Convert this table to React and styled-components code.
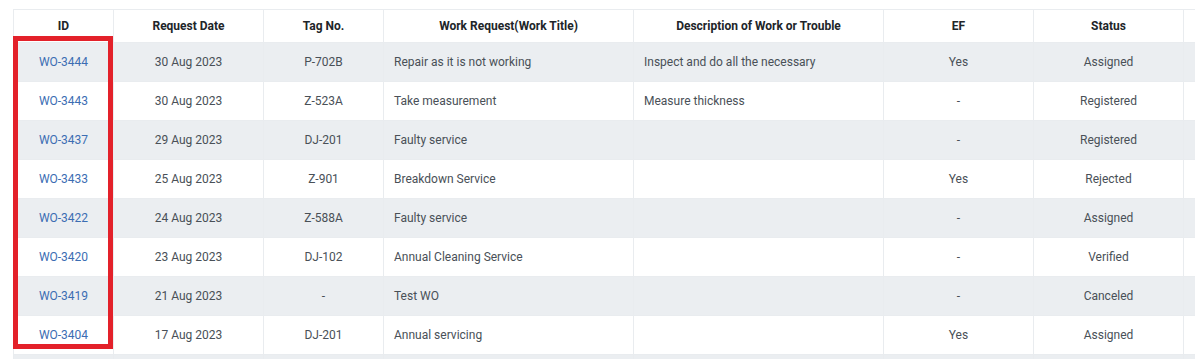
import React from "react";
import styled, { createGlobalStyle } from "styled-components";

const GlobalStyle = createGlobalStyle`
  body {
    margin: 0;
    background: #ffffff;
    font-family: Roboto, "Liberation Sans", Arial, sans-serif;
  }
`;

const columns = [
  { title: "ID", width: 100 },
  { title: "Request Date", width: 150 },
  { title: "Tag No.", width: 120 },
  { title: "Work Request(Work Title)", width: 250 },
  { title: "Description of Work or Trouble", width: 250 },
  { title: "EF", width: 150 },
  { title: "Status", width: 150 },
  { title: "", width: 150 },
];

const rows = [
  ["WO-3444", "30 Aug 2023", "P-702B", "Repair as it is not working", "Inspect and do all the necessary", "Yes", "Assigned"],
  ["WO-3443", "30 Aug 2023", "Z-523A", "Take measurement", "Measure thickness", "-", "Registered"],
  ["WO-3437", "29 Aug 2023", "DJ-201", "Faulty service", "", "-", "Registered"],
  ["WO-3433", "25 Aug 2023", "Z-901", "Breakdown Service", "", "Yes", "Rejected"],
  ["WO-3422", "24 Aug 2023", "Z-588A", "Faulty service", "", "-", "Assigned"],
  ["WO-3420", "23 Aug 2023", "DJ-102", "Annual Cleaning Service", "", "-", "Verified"],
  ["WO-3419", "21 Aug 2023", "-", "Test WO", "", "-", "Canceled"],
  ["WO-3404", "17 Aug 2023", "DJ-201", "Annual servicing", "", "Yes", "Assigned"],
  ["", "", "", "", "", "", ""],
];

const Page = styled.div`
  padding: 9px 0 0 13px;
  height: 359px;
  box-sizing: border-box;
  overflow: hidden;
`;

const TableWrap = styled.div`
  position: relative;
  width: 1320px;
`;

const Table = styled.table`
  border-collapse: collapse;
  table-layout: fixed;
  width: 1320px;
  font-size: 12px;
`;

const HeadCell = styled.th`
  height: 32px;
  padding: 0 10px;
  border: 1px solid #e9ecef;
  font-weight: 700;
  color: #212529;
  text-align: center;
  background: #ffffff;
`;

const Row = styled.tr`
  background: ${(p) => (p.$shaded ? "#ebeef1" : "#ffffff")};
`;

const Cell = styled.td`
  height: 38px;
  padding: 0 10px;
  border: 1px solid #e9ecef;
  color: #495057;
  text-align: ${(p) => (p.$left ? "left" : "center")};
  white-space: nowrap;
  overflow: hidden;
`;

const IdLink = styled.a`
  color: #3b6db3;
  text-decoration: none;
`;

// annotation frame drawn over the ID column
const Highlight = styled.div`
  position: absolute;
  left: 0;
  top: 27px;
  width: 100px;
  height: 313px;
  box-sizing: border-box;
  border: 5px solid #e3212a;
  pointer-events: none;
`;

const leftCols = [3, 4];

export default function App() {
  return (
    <Page>
      <GlobalStyle />
      <TableWrap>
        <Table>
          <colgroup>
            {columns.map((c, i) => (
              <col key={i} style={{ width: c.width }} />
            ))}
          </colgroup>
          <thead>
            <tr>
              {columns.map((c, i) => (
                <HeadCell key={i}>{c.title}</HeadCell>
              ))}
            </tr>
          </thead>
          <tbody>
            {rows.map((r, ri) => (
              <Row key={ri} $shaded={ri % 2 === 0}>
                {r.map((v, ci) => (
                  <Cell key={ci} $left={leftCols.includes(ci)}>
                    {ci === 0 && v ? <IdLink href="#">{v}</IdLink> : v}
                  </Cell>
                ))}
                <Cell />
              </Row>
            ))}
          </tbody>
        </Table>
        <Highlight />
      </TableWrap>
    </Page>
  );
}
